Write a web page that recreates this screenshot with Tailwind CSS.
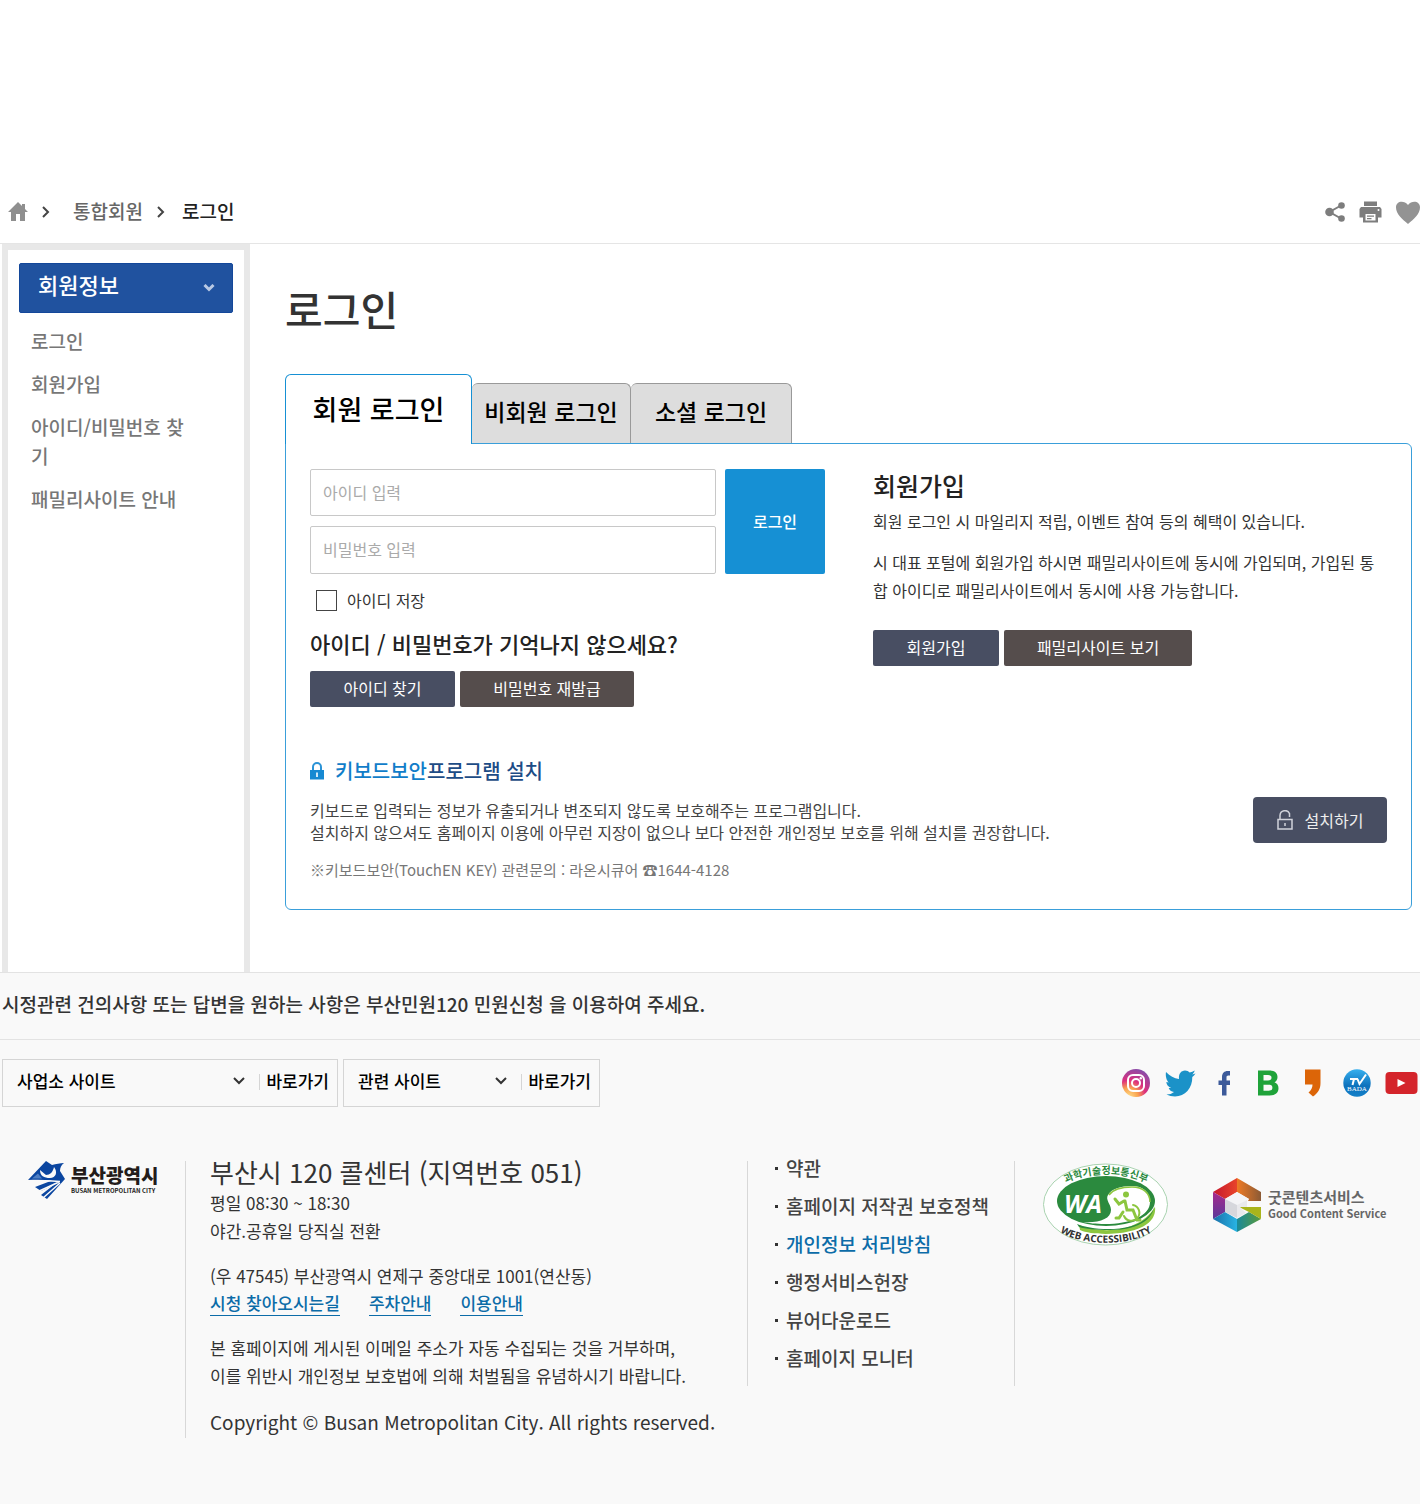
<!DOCTYPE html>
<html lang="ko">
<head>
<meta charset="utf-8">
<meta name="viewport" content="width=device-width, initial-scale=1">
<title>로그인 - 부산광역시</title>
<script src="https://cdn.jsdelivr.net/npm/@tailwindcss/browser@4"></script>
</head>
<body class="bg-white font-['Noto_Sans_CJK_KR',sans-serif] text-[#333]">

<header class="flex items-center justify-between border-b border-[#e5e5e5] pt-45">
  <nav aria-label="현재 위치" class="flex h-[63px] items-center pl-2 text-[19px] font-medium">
    <a href="#" aria-label="홈"><svg class="h-5 w-5" viewBox="0 0 20 20" fill="#8f8f8f"><path d="M10 0 0 10h3v9h5v-7h4v7h5v-9h3L17 7V2h-3v2z"/></svg></a>
    <svg class="ml-3.5 h-3 w-2" viewBox="0 0 8 12" fill="none" stroke="#444" stroke-width="2"><path d="m1 1 5 5-5 5"/></svg>
    <a href="#" class="ml-[23px] text-[#666]">통합회원</a>
    <svg class="ml-3.5 h-3 w-2" viewBox="0 0 8 12" fill="none" stroke="#444" stroke-width="2"><path d="m1 1 5 5-5 5"/></svg>
    <a href="#" class="ml-[17px] text-[#222]">로그인</a>
  </nav>
  <div class="flex items-center gap-3.5">
    <button type="button" aria-label="공유"><svg class="h-5 w-5" viewBox="0 0 20 20" fill="#7d7d7d" stroke="#7d7d7d"><path d="M16 3.500 4.500 10 16 16.500" fill="none" stroke-width="2"/><circle cx="4.500" cy="10" r="4.300" stroke="none"/><circle cx="16.500" cy="3.500" r="3.300" stroke="none"/><circle cx="16.500" cy="16.500" r="3.300" stroke="none"/></svg></button>
    <button type="button" aria-label="인쇄"><svg class="h-[22px] w-[23px]" viewBox="0 0 23 22" fill="#7d7d7d"><path d="M5 .5h13v4.500H5zM2 6h19l1.500 2v8.500H18V11H5v5.500H.500V8z"/><path d="M4 11h15v10.500H4z"/><path d="M6.500 13h10v6.500h-10z" fill="#fff"/><path d="M8 14.500h7v1.300H8zM8 17h4.500v1.300H8z"/><circle cx="19.500" cy="9" r="1" fill="#fff"/></svg></button>
    <button type="button" aria-label="관심"><svg class="h-6 w-6" viewBox="0 0 24 24" fill="#939393"><path d="M12 24C6 19 0 14 0 7.500 0 1 8 0 12 5c4-5 12-4 12 2.500C24 14 18 19 12 24z"/></svg></button>
  </div>
</header>

<main class="flex">
  <aside class="ml-0.5 w-[248px] shrink-0 border-x-6 border-t-6 border-[#e8e8e8] px-[11px] pt-[13px]">
    <button type="button" class="flex h-[50px] w-full items-center justify-between rounded-xs border border-[#13479a] bg-[#20529f] pr-[17px] pb-2 pl-[18px] text-[22px] font-medium text-white">회원정보
      <svg class="mt-2 h-2 w-3" viewBox="0 0 12 8" fill="none" stroke="#b9c9e4" stroke-width="3"><path d="m1.500 1 4.500 4.500L10.500 1"/></svg>
    </button>
    <ul class="flex flex-col gap-3.5 pt-[13px] pr-9 pl-3 text-[19px] leading-[29px] font-medium text-[#777]">
      <li><a href="#">로그인</a></li>
      <li><a href="#">회원가입</a></li>
      <li><a href="#">아이디/비밀번호 찾기</a></li>
      <li><a href="#">패밀리사이트 안내</a></li>
    </ul>
  </aside>

  <section class="min-w-0 flex-1 pt-[34px] pr-2 pb-[62px] pl-[35px]">
    <h1 class="text-[41px] leading-[60px] font-medium">로그인</h1>

    <div role="tablist" class="mt-9 flex items-end text-black">
      <button type="button" role="tab" aria-selected="true" class="relative -mb-px h-[70px] w-[187px] rounded-t-md border border-b-0 border-[#1690d4] bg-white text-[27px] font-medium">회원 로그인</button>
      <button type="button" role="tab" aria-selected="false" class="h-[60px] w-[159px] rounded-t-md border border-b-0 border-l-0 border-[#999] bg-[#ddd] pb-1 text-[23px] font-medium">비회원 로그인</button>
      <button type="button" role="tab" aria-selected="false" class="h-[60px] w-[161px] rounded-t-md border border-b-0 border-l-0 border-[#999] bg-[#ddd] pb-1 text-[23px] font-medium">소셜 로그인</button>
    </div>

    <div role="tabpanel" class="rounded-b-md rounded-tr-md border border-[#3a9fda] pt-[25px] pb-7 pl-6">
      <div class="flex gap-12 pr-8">
        <form class="w-[515px] shrink-0">
          <div class="flex gap-[9px]">
            <div class="flex flex-1 flex-col gap-2.5">
              <input type="text" aria-label="아이디" placeholder="아이디 입력" class="h-[47px] rounded-xs border border-[#c8c8c8] px-3 pb-0.5 text-base placeholder:text-[#aaa]">
              <input type="password" aria-label="비밀번호" placeholder="비밀번호 입력" class="h-12 rounded-xs border border-[#c8c8c8] px-3 pb-0.5 text-base placeholder:text-[#aaa]">
            </div>
            <button type="submit" class="w-[100px] rounded-xs bg-[#1690d4] pb-0.5 text-base font-medium text-white">로그인</button>
          </div>
          <label class="mt-3.5 flex items-center gap-2.5 pl-1.5 text-base leading-6"><input type="checkbox" class="h-[21px] w-[21px] appearance-none border border-[#444] bg-white">아이디 저장</label>
          <h3 class="mt-[15px] text-[22px] leading-8 font-medium text-[#222]">아이디 / 비밀번호가 기억나지 않으세요?</h3>
          <div class="mt-3 flex gap-[5px] text-base text-white">
            <button type="button" class="h-9 w-[145px] rounded-xs bg-[#484e62] pb-0.5">아이디 찾기</button>
            <button type="button" class="h-9 w-[174px] rounded-xs bg-[#554d4c] pb-0.5">비밀번호 재발급</button>
          </div>
        </form>
        <div class="min-w-0 flex-1 text-base leading-7">
          <h2 class="text-[25px] leading-8 font-medium text-[#222]">회원가입</h2>
          <p class="mt-1.5">회원 로그인 시 마일리지 적립, 이벤트 참여 등의 혜택이 있습니다.</p>
          <p class="mt-[13px]">시 대표 포털에 회원가입 하시면 패밀리사이트에 동시에 가입되며, 가입된 통합 아이디로 패밀리사이트에서 동시에 사용 가능합니다.</p>
          <div class="mt-[26px] flex gap-[5px] text-base text-white">
            <a href="#" class="flex h-9 w-[126px] items-center justify-center rounded-xs bg-[#484e62] pb-0.5">회원가입</a>
            <a href="#" class="flex h-9 w-[188px] items-center justify-center rounded-xs bg-[#554d4c] pb-0.5">패밀리사이트 보기</a>
          </div>
        </div>
      </div>

      <div class="mt-12 flex items-center justify-between pr-6">
        <div>
          <h3 class="flex items-center gap-[11px] text-[20px] leading-8 font-medium text-[#1d4c86]">
            <svg class="h-[18px] w-3.5" viewBox="0 0 14 18"><path d="M3 9V5a4 4 0 0 1 8 0v4" fill="none" stroke="#2b93d6" stroke-width="2"/><path d="M0 8h14v9.500H0z" fill="#1689d2"/><path d="M6 10.500h2V15H6z" fill="#cfe8f8"/></svg>
            <span><span class="text-[#117dc9]">키보드보안</span>프로그램 설치</span>
          </h3>
          <p class="mt-3 text-base leading-[22px] text-[#444]">키보드로 입력되는 정보가 유출되거나 변조되지 않도록 보호해주는 프로그램입니다.<br>설치하지 않으셔도 홈페이지 이용에 아무런 지장이 없으나 보다 안전한 개인정보 보호를 위해 설치를 권장합니다.</p>
          <p class="mt-4 text-[15px] leading-[22px] text-[#777]">※키보드보안(TouchEN KEY) 관련문의 : 라온시큐어 ☎1644-4128</p>
        </div>
        <button type="button" class="mt-1 flex h-[46px] w-[134px] shrink-0 items-center justify-center gap-3 rounded-sm bg-[#484e62] text-base text-[#eee]">
          <svg class="h-5 w-4" viewBox="0 0 16 20" fill="none" stroke="#d0d2da" stroke-width="1.500"><path d="M1 9.500h14V19H1zM3 9.500V5.500a5 5 0 0 1 9.500-2V7M8 13v3"/></svg>
          설치하기
        </button>
      </div>
    </div>
  </section>
</main>

<footer class="border-t border-[#e3e3e3] bg-[#f9f9f9] pb-[66px]">
  <p class="border-b border-[#e3e3e3] pt-[15px] pb-[19px] pl-0.5 text-[19px] leading-8 font-medium">시정관련 건의사항 또는 답변을 원하는 사항은 부산민원120 민원신청 을 이용하여 주세요.</p>

  <div class="flex items-center justify-between pt-[19px] pr-0.5 pl-0.5">
    <div class="flex gap-[5px] text-[17px] font-medium text-black">
      <form class="flex h-12 w-[336px] items-center border border-[#d5d5d5] pr-2 pb-1">
        <div class="relative flex flex-1 items-center">
          <select aria-label="사업소 사이트" class="w-full appearance-none pl-3.5"><option>사업소 사이트</option></select>
          <svg class="pointer-events-none absolute right-3.5 h-2 w-3" viewBox="0 0 12 8" fill="none" stroke="#333" stroke-width="2"><path d="m1 1 5 5 5-5"/></svg>
        </div>
        <button type="button" class="flex items-center gap-1.5"><span class="mt-0.5 h-4 w-px bg-[#d5d5d5]"></span>바로가기</button>
      </form>
      <form class="flex h-12 w-[257px] items-center border border-[#d5d5d5] pr-2 pb-1">
        <div class="relative flex flex-1 items-center">
          <select aria-label="관련 사이트" class="w-full appearance-none pl-3.5"><option>관련 사이트</option></select>
          <svg class="pointer-events-none absolute right-3.5 h-2 w-3" viewBox="0 0 12 8" fill="none" stroke="#333" stroke-width="2"><path d="m1 1 5 5 5-5"/></svg>
        </div>
        <button type="button" class="flex items-center gap-1.5"><span class="mt-0.5 h-4 w-px bg-[#d5d5d5]"></span>바로가기</button>
      </form>
    </div>
    <div class="flex items-center gap-3 pb-px">
      <a href="#" aria-label="인스타그램"><svg class="h-8 w-8" viewBox="0 0 32 32"><defs><radialGradient id="ig" cx=".25" cy="1" r="1.100"><stop offset="0" stop-color="#fd8"/><stop offset=".3" stop-color="#f9a24f"/><stop offset=".55" stop-color="#dd2f7d"/><stop offset="1" stop-color="#7e4fae"/></radialGradient></defs><circle cx="15" cy="16" r="14" fill="url(#ig)"/><g fill="none" stroke="#fff" stroke-width="2"><rect x="7" y="8" width="16" height="16" rx="5"/><circle cx="15" cy="16" r="4"/></g><circle cx="19.800" cy="11.200" r="1.200" fill="#fff"/></svg></a>
      <a href="#" aria-label="트위터"><svg class="h-8 w-8" viewBox="0 0 32 32" fill="#1b92c8"><path d="M1 5c4 4 8 6.500 13 7-.5-5 2-8.500 6-8.500 2 0 3.500.8 4.700 2 1.800-.3 3.400-1 5-1.900-.4 1.900-1.500 3-2.500 3.800 1.200-.1 2.200-.4 3.300-.8-1 1.500-2 2.500-3.200 3.400C27.500 21 20 29.500 10 29.500c-3 0-6-.8-8.500-2 3 0 5.500-.8 7.500-2.500-2.800-.3-4.500-1.700-5.300-4h2.500C3.500 20 1.500 18 1.300 15l2.500.6C1.500 13.500.3 9 1 5z"/></svg></a>
      <a href="#" aria-label="페이스북"><svg class="h-8 w-8" viewBox="0 0 32 32" fill="#3c5a9a"><path d="M13 28.500V18h-3.500v-4.500H13V10c0-4 2.500-6 5.500-6H21v4.500h-1.700c-1.300 0-1.800.7-1.800 1.800v3.200H21v4.500h-3.500v10.500z"/></svg></a>
      <a href="#" aria-label="블로그"><svg class="h-8 w-8" viewBox="0 0 32 32" fill="#1fa33a" fill-rule="evenodd"><path d="M5 3.500h11.500c5 0 8 2.500 8 6.500 0 2.500-1.200 4.300-3 5.300 2.600 1 4 3 4 6 0 4.500-3.200 7.200-8.500 7.200H5zM10.500 8v5.500H15c2.300 0 3.500-1 3.500-2.800S17.300 8 15 8zm0 9.700v6.100h5.200c2.400 0 3.700-1.100 3.700-3.100s-1.300-3-3.700-3z"/></svg></a>
      <a href="#" aria-label="카카오스토리"><svg class="h-8 w-8" viewBox="0 0 32 32" fill="#dc6508"><path d="M8 2.500h15.500V16c0 6-2.500 10-7.500 13.500L11.500 25.500c2.800-2.500 4-4.800 4-8H8z"/></svg></a>
      <a href="#" aria-label="바다TV"><svg class="h-8 w-8" viewBox="0 0 32 32"><defs><linearGradient id="tv" x2="0" y2="1"><stop stop-color="#38b0ee"/><stop offset=".6" stop-color="#0d72bd"/><stop offset="1" stop-color="#1580c8"/></linearGradient></defs><circle cx="16" cy="16" r="13.700" fill="url(#tv)"/><path d="M9 12h8M13 12l-1.500 6M16.500 12l2 5L25 7.500" fill="none" stroke="#fff" stroke-width="2"/><text x="16" y="24" text-anchor="middle" font-size="7" fill="#fff" class="font-['Liberation_Serif',serif]">BADA</text></svg></a>
      <a href="#" aria-label="유튜브"><svg class="h-8 w-[33px]" viewBox="0 0 33 32"><rect x=".5" y="5" width="32" height="22" rx="4" fill="#d4242b"/><path d="m12.500 12 8 4-8 4z" fill="#fff"/></svg></a>
    </div>
  </div>

  <div class="flex items-start pt-[54px]">
    <a href="#" aria-label="부산광역시" class="flex w-[185px] shrink-0 items-center gap-[5px] pl-7">
      <svg class="h-[39px] w-[38px] shrink-0" viewBox="0 0 38 39"><path d="M0 19 18 0l6 4c4-1 8-2 12-2-3 2-4 5-4 8l5 8-18 20-6-4 14-11-14 7-6-4L24 19.500C16 18.500 8 18.500 0 19z" fill="#0b46a0"/><path d="M12 9l6 5c4 0 7-3 8-8 4 5 2 11-4 11-6 0-10-2-10-8z" fill="#f9f9f9"/><path d="m4 17.500 6-5 4 5z" fill="#4f7fc4"/><path d="M0 20.500c10-1 22-1 32 0M9 31 31 21M15 37l17-15" fill="none" stroke="#f9f9f9" stroke-width="1.500"/></svg>
      <span class="pb-1 whitespace-nowrap text-[#231c1a]"><span class="block text-[19px] leading-6 font-black">부산광역시</span><span class="block text-[6px] leading-2 font-bold">BUSAN METROPOLITAN CITY</span></span>
    </a>

    <div class="w-[562px] shrink-0 border-l border-[#d8d8d8] pl-6 text-[17px] leading-7">
      <h2 class="mb-1.5 text-[26px] leading-[22px]">부산시 120 콜센터 (지역번호 051)</h2>
      <p>평일 08:30 ~ 18:30<br>야간.공휴일 당직실 전환</p>
      <p class="mt-[17px]">(우 47545) 부산광역시 연제구 중앙대로 1001(연산동)</p>
      <div class="flex gap-[29px] font-medium text-[#0c6ca8]">
        <a href="#" class="border-b border-[#0c6ca8] leading-[25px]">시청 찾아오시는길</a>
        <a href="#" class="border-b border-[#0c6ca8] leading-[25px]">주차안내</a>
        <a href="#" class="border-b border-[#0c6ca8] leading-[25px]">이용안내</a>
      </div>
      <p class="mt-[18px]">본 홈페이지에 게시된 이메일 주소가 자동 수집되는 것을 거부하며,<br>이를 위반시 개인정보 보호법에 의해 처벌됨을 유념하시기 바랍니다.</p>
      <p class="mt-[18px] pb-0.5 text-[19px]">Copyright © Busan Metropolitan City. All rights reserved.</p>
    </div>

    <ul class="flex h-[225px] w-[268px] shrink-0 flex-col gap-2 border-x border-[#d8d8d8] pl-[27px] text-[19px] leading-[30px] font-medium text-[#444]">
      <li class="-mt-2 flex items-center gap-2"><span class="h-[3px] w-[3px] bg-[#333]"></span><a href="#">약관</a></li>
      <li class="flex items-center gap-2"><span class="h-[3px] w-[3px] bg-[#333]"></span><a href="#">홈페이지 저작권 보호정책</a></li>
      <li class="flex items-center gap-2"><span class="h-[3px] w-[3px] bg-[#333]"></span><a href="#" class="text-[#0c6ca8]">개인정보 처리방침</a></li>
      <li class="flex items-center gap-2"><span class="h-[3px] w-[3px] bg-[#333]"></span><a href="#">행정서비스헌장</a></li>
      <li class="flex items-center gap-2"><span class="h-[3px] w-[3px] bg-[#333]"></span><a href="#">뷰어다운로드</a></li>
      <li class="flex items-center gap-2"><span class="h-[3px] w-[3px] bg-[#333]"></span><a href="#">홈페이지 모니터</a></li>
    </ul>

    <div class="flex items-center gap-[45px] pt-0.5 pl-7">
      <a href="#" aria-label="웹 접근성 인증마크" class="shrink-0"><svg class="h-[83px] w-[125px] overflow-visible" viewBox="0 0 125 83">
        <defs><path id="arcTop" d="M12 27C36 6 90 6 114 27"/><path id="arcBottom" d="M14 67C36 84 90 84 112 67"/></defs>
        <ellipse cx="62.500" cy="41.500" rx="62" ry="40.500" fill="#fff" stroke="#a9d3b0"/>
        <path d="M36 62c22 9 60 8 76-18 0 0 2 10-8 17-16 12-54 12-67 6z" fill="#8cc63f"/>
        <ellipse cx="63" cy="38" rx="49" ry="25" fill="#2b8a3e"/>
        <path d="M34 61c14 6 55 10 72-8 6-7 6-12 6-15 0 16-13 29-45 29-14 0-25-1-31-3z" fill="#2b8a3e"/>
        <path d="M40 59c16 1 28-3 28-12 0-6-6-10-3-15 3-6 13-9 24-9 11 0 18 6 18 16 0 14-20 22-45 22-9 0-17-1-22-2z" fill="#fff"/>
        <path d="M66 32c5-7 15-8 23-8 11 0 18 6 18 15" fill="none" stroke="#8cc63f" stroke-width="1.500"/>
        <text x="21" y="50" font-size="25" font-weight="700" font-style="italic" fill="#fff" class="font-['Open_Sans',sans-serif]">WA</text>
        <g fill="none" stroke="#8cc63f" stroke-width="2" stroke-linecap="round"><path d="M90 42a8 8 0 1 1-9 11"/><path d="M82 38l2 9h6l4 10h3M81 38l-5 3-4-5M73 55h3l4-6" stroke-width="3"/></g><circle cx="83" cy="31.500" r="3" fill="#8cc63f"/>
        <text font-size="10" font-weight="700" fill="#2b8a3e" text-anchor="middle"><textPath href="#arcTop" startOffset="50%">과학기술정보통신부</textPath></text>
        <text font-size="10" font-weight="700" fill="#333" text-anchor="middle" class="font-['Open_Sans',sans-serif]"><textPath href="#arcBottom" startOffset="50%">WEB ACCESSIBILITY</textPath></text>
      </svg></a>
      <a href="#" class="flex items-center gap-[7px] whitespace-nowrap text-[#666]">
        <svg class="h-[54px] w-12 shrink-0" viewBox="0 0 48 54">
          <defs><linearGradient id="g1"><stop stop-color="#c5162e"/><stop offset="1" stop-color="#e8442a"/></linearGradient><linearGradient id="g2"><stop stop-color="#ef7a24"/><stop offset="1" stop-color="#8b5a35"/></linearGradient><linearGradient id="g3" x2="0" y2="1"><stop stop-color="#a8288c"/><stop offset="1" stop-color="#5a3a9a"/></linearGradient><linearGradient id="g4"><stop stop-color="#1a6fa8"/><stop offset="1" stop-color="#28b4e4"/></linearGradient><linearGradient id="g5"><stop stop-color="#1a8a9a"/><stop offset="1" stop-color="#5a9a3a"/></linearGradient></defs>
          <path d="M0 14 24 0v14L12 21z" fill="url(#g1)"/><path d="m24 0 24 14v9H35l1-2-12-7z" fill="url(#g2)"/><path d="m0 14 12 7v13L0 41z" fill="url(#g3)"/><path d="m0 41 12-7 12 7v13z" fill="url(#g4)"/><path d="m24 54V41l12-7 12 7z" fill="url(#g5)"/><path d="M26 29h22v12l-12-7z" fill="#a9b41c"/>
          <path d="m24 14 12 7-12 6-12-6z" fill="#f4f4f6"/><path d="m12 21 12 6v13l-12-6z" fill="#d6d7dc"/><path d="M24 27l10-5v7h-7l6 6-9 5z" fill="#e9e9ec"/>
        </svg>
        <span><span class="block text-[15px] leading-[17px] font-bold">굿콘텐츠서비스</span><span class="block text-[11px] leading-[17px] font-bold">Good Content Service</span></span>
      </a>
    </div>
  </div>
</footer>
</body>
</html>
